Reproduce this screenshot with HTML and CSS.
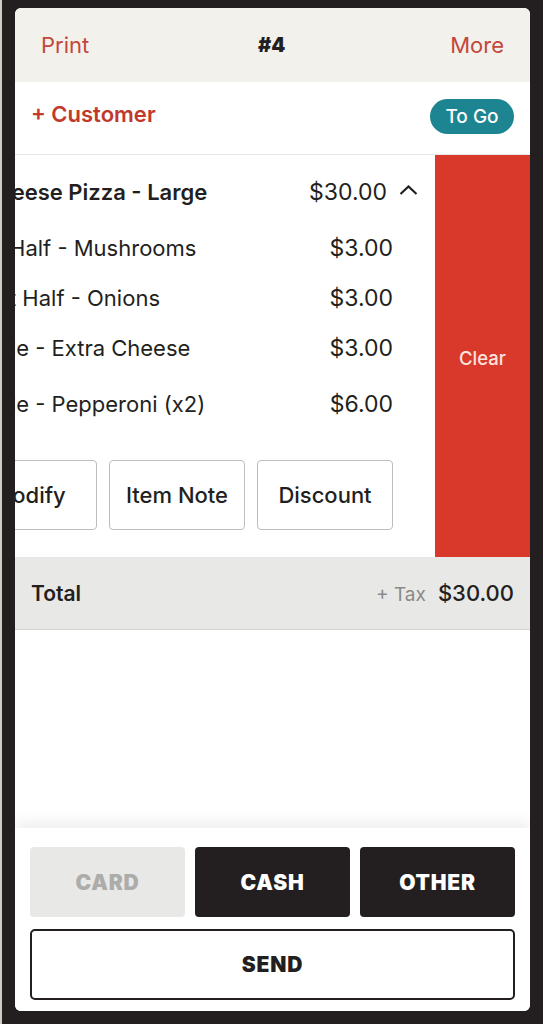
FILE: index.html
```html
<!DOCTYPE html>
<html lang="en">
<head>
<meta charset="utf-8">
<title>Order #4</title>
<link rel="stylesheet" href="styles.css">
</head>
<body>
<div class="bezel"></div>
<main class="panel">
  <header class="topbar">
    <span class="link">Print</span>
    <span class="order-no">#4</span>
    <span class="link">More</span>
  </header>
  <div class="customer-row">
    <span class="add-customer">+ Customer</span>
    <span class="pill">To Go</span>
  </div>
  <section class="items">
    <div class="track">
      <div class="track-inner">
        <div class="row main-row">
          <span class="name main-name">Cheese Pizza - Large</span>
          <span class="price-wrap">
            <span class="price">$30.00</span>
            <svg class="chev" width="19" height="10" viewBox="0 0 19 10"><path d="M1.5 9 L9.5 1.5 L17.5 9" fill="none" stroke="#231f20" stroke-width="2.2"/></svg>
          </span>
        </div>
        <div class="row sub-row"><span class="name">Left Half - Mushrooms</span><span class="price">$3.00</span></div>
        <div class="row sub-row"><span class="name">Right Half - Onions</span><span class="price">$3.00</span></div>
        <div class="row sub-row"><span class="name">Whole - Extra Cheese</span><span class="price">$3.00</span></div>
        <div class="row sub-row last"><span class="name">Whole - Pepperoni (x2)</span><span class="price">$6.00</span></div>
        <div class="actions">
          <button class="act">Modify</button>
          <button class="act">Item Note</button>
          <button class="act">Discount</button>
        </div>
      </div>
    </div>
    <div class="clear">Clear</div>
  </section>
  <div class="total-row">
    <span class="total-label">Total</span>
    <span class="total-right"><span class="tax">+ Tax</span><span class="total-amt">$30.00</span></span>
  </div>
  <div class="spacer"></div>
  <footer class="bottom">
    <div class="pay-row">
      <button class="pay disabled">CARD</button>
      <button class="pay dark">CASH</button>
      <button class="pay dark">OTHER</button>
    </div>
    <button class="send">SEND</button>
  </footer>
</main>
</body>
</html>
```
FILE: styles.css
```css
* { box-sizing: border-box; }
html, body { margin: 0; padding: 0; }
body {
  background: #231f20;
  width: 543px;
  height: 1024px;
  overflow: hidden;
  position: relative;
  font-family: Inter, "Liberation Sans", Arial, sans-serif;
  color: #231f20;
}
.bezel {
  position: absolute;
  left: 0; top: 0; bottom: 0;
  width: 2px;
  background: #cfcbc4;
}
.panel {
  margin: 8px 13px 0 15px;
  width: 515px;
  height: 1003px;
  background: #fff;
  border-radius: 6px;
  overflow: hidden;
  display: flex;
  flex-direction: column;
}
.topbar {
  height: 74px;
  background: #f2f1ec;
  display: flex;
  align-items: center;
  justify-content: space-between;
  padding: 0 26px 0 26px;
  flex-shrink: 0;
}
.link { color: #c4463c; font-size: 22px; }
.order-no { font-weight: 900; font-size: 20px; margin-left: 4px; }
.customer-row {
  height: 73px;
  border-bottom: 1px solid #e6e6e6;
  display: flex;
  align-items: center;
  justify-content: space-between;
  padding: 0 16px;
  flex-shrink: 0;
}
.add-customer { color: #c0392b; font-weight: 600; font-size: 22px; margin-top: -9px; }
.pill {
  background: #1d8591;
  color: #fff;
  font-size: 19px;
  font-weight: 500;
  height: 35px;
  width: 84px;
  border-radius: 18px;
  display: flex;
  align-items: center;
  justify-content: center;
  margin-top: -3px;
}
.items {
  height: 402px;
  display: flex;
  flex-shrink: 0;
}
.track {
  flex: 1;
  overflow: hidden;
}
.track-inner {
  margin-left: -52px;
  padding-top: 12px;
}
.row {
  display: flex;
  align-items: center;
  justify-content: space-between;
  height: 50px;
  font-size: 22px;
}
.price { font-size: 23px; }
.main-row { padding-right: 17px; margin-bottom: 6px; padding-left: 19px; }
.main-name { font-weight: 600; }
.price-wrap { display: flex; align-items: center; gap: 12px; }
.chev { margin-top: -4px; }
.sub-row { padding-right: 42px; }
.sub-row.last { margin-top: 6px; }
.actions {
  display: flex;
  justify-content: flex-end;
  gap: 12px;
  padding-right: 42px;
  margin-top: 31px;
}
.act {
  width: 136px;
  height: 70px;
  background: #fff;
  border: 1.5px solid #bdbdbd;
  border-radius: 4px;
  font-family: inherit;
  font-size: 22px;
  font-weight: 500;
  color: #231f20;
  flex-shrink: 0;
}
.clear {
  width: 95px;
  background: #d9392b;
  color: #fbe3de;
  font-size: 18.5px;
  font-weight: 500;
  display: flex;
  align-items: center;
  justify-content: center;
  padding-top: 3px;
}
.total-row {
  height: 73px;
  background: #e8e8e6;
  border-bottom: 1px solid #d4d4d2;
  display: flex;
  align-items: center;
  justify-content: space-between;
  padding: 0 16px;
  flex-shrink: 0;
}
.total-label { font-weight: 600; font-size: 21px; }
.total-right { display: flex; align-items: baseline; gap: 12px; }
.tax { color: #8a8a88; font-size: 19px; }
.total-amt { font-size: 22px; font-weight: 500; }
.spacer { flex: 1; background: #fff; }
.bottom {
  background: #fff;
  padding: 19px 15px 11px;
  box-shadow: 0 -6px 14px rgba(0,0,0,0.07);
  position: relative;
  flex-shrink: 0;
}
.pay-row {
  display: grid;
  grid-template-columns: 1fr 1fr 1fr;
  gap: 10px;
  margin-bottom: 12px;
}
.pay {
  height: 70px;
  border: none;
  border-radius: 4px;
  font-family: inherit;
  font-weight: 900;
  font-size: 21px;
  letter-spacing: 0.8px;
}
.pay.disabled { background: #e8e8e6; color: #acacaa; }
.pay.dark { background: #231f20; color: #fff; }
.send {
  width: 100%;
  height: 71px;
  background: #fff;
  border: 2px solid #231f20;
  border-radius: 5px;
  font-family: inherit;
  font-weight: 900;
  font-size: 21px;
  letter-spacing: 0.8px;
  color: #231f20;
}
```
